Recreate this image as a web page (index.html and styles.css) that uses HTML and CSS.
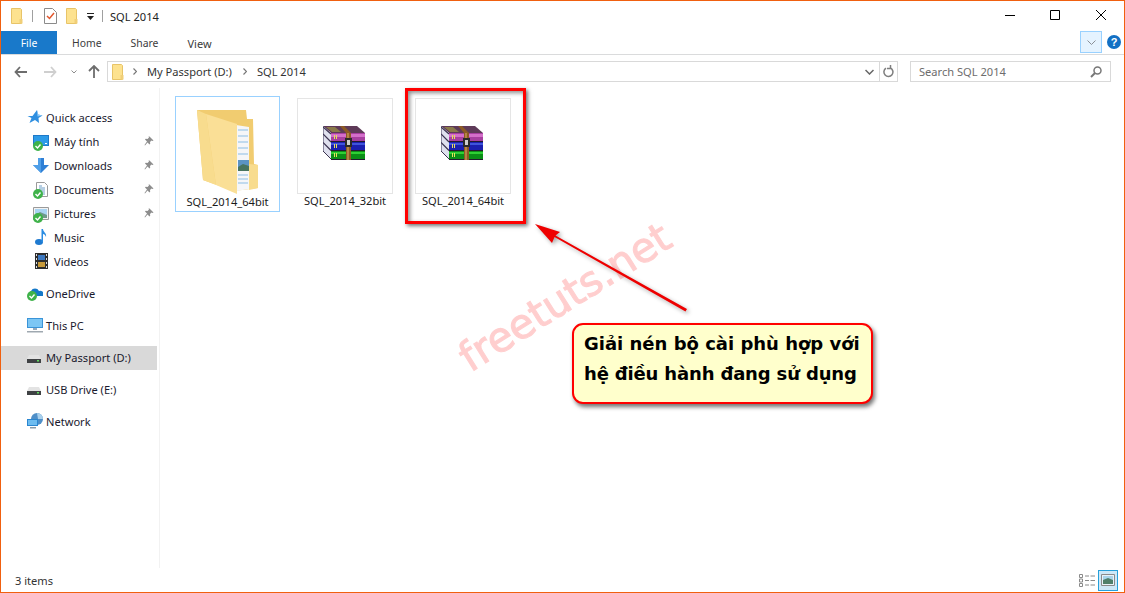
FILE: index.html
```html
<!DOCTYPE html>
<html lang="en">
<head>
<meta charset="utf-8">
<title>SQL 2014</title>
<link rel="stylesheet" href="styles.css">
</head>
<body>
<svg class="defs" width="0" height="0" aria-hidden="true">
  <defs>
    <symbol id="folder-small" viewBox="0 0 12 16">
      <path d="M.5.5h9l1 1v14H.5z" fill="#fde28f" stroke="#e8c468"/>
      <path d="M8.5 11h3v4.500h-3z" fill="#f0cf78"/>
    </symbol>
    <symbol id="rar" viewBox="0 0 44 34">
      <path d="M0 0h34l8 7H8z" fill="#5e3a58"/>
      <path d="M3 1h9l6 5H9z" fill="#8a7a4a"/>
      <path d="M0 0l8 7v26l-8-8z" fill="#dfe0ee"/>
      <path d="M0 8l8 8M0 16.500l8 8M0 1l8 7" stroke="#3b3350" stroke-width="1.200"/>
      <path d="M0 0v25l8 8" fill="none" stroke="#3b3350"/>
      <path d="M8 7h34v8H8z" fill="#a83fa0"/>
      <path d="M8 8h34v3H8z" fill="#d46fca"/>
      <path d="M8 16h34v8H8z" fill="#1a1fb0"/>
      <path d="M8 17h34v2H8z" fill="#3f55dc"/>
      <path d="M8 25h34v8H8z" fill="#0a8f16"/>
      <path d="M8 26h34v2H8z" fill="#2fd034"/>
      <path d="M8 15h34v1H8zM8 24h34v1H8zM8 33h34v1H8z" fill="#221a30"/>
      <path d="M11 9h1v4h-1zM13 9h1v4h-1zM11 18h1v4h-1zM13 18h1v4h-1zM11 27h1v4h-1zM13 27h1v4h-1z" fill="#e8e05a"/>
      <path d="M17 0h4l7 7v27h-5V7z" fill="#8c5a24"/>
      <path d="M24 7h2v27h-2z" fill="#b58545"/>
      <path d="M22 12h7v9h-7z" fill="#2a2a2a"/>
      <path d="M24 14h3v5h-3z" fill="#cfcfcf"/>
    </symbol>
    <symbol id="check-badge" viewBox="0 0 10 10">
      <circle cx="5" cy="5" r="5" fill="#3fb24a"/>
      <path d="M2.500 5l2 2 3-3.500" fill="none" stroke="#fff" stroke-width="1.400"/>
    </symbol>
    <symbol id="pin" viewBox="0 0 10 10">
      <path d="M5.500.5l4 4-1 .5-1-.5-1.500 1.500.2 1.800-.7.7-2-2L1 9.500l-.5-.5 2.500-3.500-2-2 .7-.7 1.800.2L5 1.500 4.500.5z" fill="#8d8d8d"/>
    </symbol>
    <symbol id="drive" viewBox="0 0 14 8">
      <path d="M2 0h10l2 4v4H0V4z" fill="#e3e3e3"/>
      <path d="M0 4h14v4H0z" fill="#3f4244"/>
      <path d="M10 5h2v1.500h-2z" fill="#5fdc5f"/>
    </symbol>
  </defs>
</svg>

<div class="window">
  <header class="titlebar">
    <svg class="qat-folder" width="12" height="16"><use href="#folder-small"/></svg>
    <span class="qat-sep"></span>
    <svg class="qat-doc" width="13" height="16" viewBox="0 0 13 16">
      <path d="M.5.5h8l4 4v11H.5z" fill="#fff" stroke="#8b8b8b"/>
      <path d="M3 8l2.500 2.500L10 5" fill="none" stroke="#e2562d" stroke-width="1.500"/>
    </svg>
    <svg class="qat-folder2" width="12" height="16"><use href="#folder-small"/></svg>
    <svg class="qat-drop" width="7" height="7" viewBox="0 0 7 7">
      <path d="M0 0h7v1H0zM0 3h7L3.500 7z" fill="#222"/>
    </svg>
    <span class="qat-sep qat-sep-end"></span>
    <span class="title-text">SQL 2014</span>
    <div class="window-controls">
      <svg width="10" height="10" viewBox="0 0 10 10"><path d="M0 5.500h10" stroke="#000"/></svg>
      <svg width="10" height="10" viewBox="0 0 10 10"><path d="M.5.500h9v9h-9z" fill="none" stroke="#000"/></svg>
      <svg width="10" height="10" viewBox="0 0 10 10"><path d="M0 0l10 10M10 0L0 10" stroke="#000"/></svg>
    </div>
  </header>

  <nav class="ribbon">
    <span class="tab tab-file">File</span>
    <span class="tab tab-home">Home</span>
    <span class="tab tab-share">Share</span>
    <span class="tab tab-view">View</span>
    <span class="ribbon-expand">
      <svg width="9" height="5" viewBox="0 0 9 5"><path d="M.5.500l4 4 4-4" fill="none" stroke="#8a8f96"/></svg>
    </span>
    <span class="help">?</span>
  </nav>

  <div class="addressbar">
    <svg class="nav-back" width="13" height="12" viewBox="0 0 13 12"><path d="M6 1L1.500 6 6 11M2 6h11" fill="none" stroke="#6d6d6d" stroke-width="1.800"/></svg>
    <svg class="nav-forward" width="13" height="12" viewBox="0 0 13 12"><path d="M7 1l4.500 5L7 11M11 6H0" fill="none" stroke="#cfcfcf" stroke-width="1.800"/></svg>
    <svg class="nav-recent" width="6" height="4" viewBox="0 0 6 4"><path d="M.5.500L3 3 5.500.5" fill="none" stroke="#8d8d8d"/></svg>
    <svg class="nav-up" width="12" height="13" viewBox="0 0 12 13"><path d="M1 6l5-5 5 5M6 1.500V13" fill="none" stroke="#6d6d6d" stroke-width="1.800"/></svg>
    <div class="path-box">
      <svg class="path-folder" width="12" height="16"><use href="#folder-small"/></svg>
      <svg class="crumb-chev" width="4" height="7" viewBox="0 0 4 7"><path d="M.5.500l3 3-3 3" fill="none" stroke="#777" stroke-width="1.200"/></svg>
      <span class="crumb crumb-drive">My Passport (D:)</span>
      <svg class="crumb-chev crumb-chev-2" width="4" height="7" viewBox="0 0 4 7"><path d="M.5.500l3 3-3 3" fill="none" stroke="#777" stroke-width="1.200"/></svg>
      <span class="crumb crumb-folder">SQL 2014</span>
      <svg class="path-drop" width="9" height="6" viewBox="0 0 9 6"><path d="M.5 1l4 4 4-4" fill="none" stroke="#666" stroke-width="1.500"/></svg>
      <span class="path-refresh">
        <svg width="11" height="13" viewBox="0 0 11 13"><path d="M3 3.200a4.500 4.500 0 1 0 4.500-.2M7.500 0v3.500H4" fill="none" stroke="#7f7f7f" stroke-width="1.500"/></svg>
      </span>
    </div>
    <div class="search-box">
      <span class="search-text">Search SQL 2014</span>
      <svg width="12" height="12" viewBox="0 0 12 12"><circle cx="7.500" cy="4.500" r="3.500" fill="none" stroke="#777" stroke-width="1.500"/><path d="M5 7l-4 4" stroke="#777" stroke-width="2"/></svg>
    </div>
  </div>

  <main class="main">
    <aside class="sidebar">
      <div class="nav-group">
        <div class="nav-row nav-top">
          <svg class="nav-icon" width="16" height="14" viewBox="0 0 15 14"><path d="M9.500 0l1 4.500L15 5.500l-4 2.500.5 5-4-3L2 13l2-5L0 6h5z" fill="#2f8fe0"/><path d="M9.500 0l1 4.500L15 5.500l-5 1z" fill="#8cc8f5"/></svg>
          <span>Quick access</span>
        </div>
        <div class="nav-row nav-sub">
          <span class="icon-wrap">
            <svg width="16" height="13" viewBox="0 0 16 13"><path d="M0 0h16v11H0z" fill="#1e79c8"/><path d="M1 1h14v9H1z" fill="#2d9be8"/><path d="M12 8h2v1h-2z" fill="#fff"/></svg>
            <svg class="badge" width="10" height="10"><use href="#check-badge"/></svg>
          </span>
          <span>Máy tính</span>
          <svg class="pin" width="10" height="10"><use href="#pin"/></svg>
        </div>
        <div class="nav-row nav-sub">
          <span class="icon-wrap">
            <svg width="16" height="15" viewBox="0 0 16 15"><path d="M5 0h6v7h5l-8 8-8-8h5z" fill="#2f80d6"/><path d="M5 0h3v15L0 7h5z" fill="#4f9fe8"/></svg>
          </span>
          <span>Downloads</span>
          <svg class="pin" width="10" height="10"><use href="#pin"/></svg>
        </div>
        <div class="nav-row nav-sub">
          <span class="icon-wrap">
            <svg width="15" height="15" viewBox="0 0 15 15"><path d="M3.500.5h8l3 3v11h-11z" fill="#fff" stroke="#9a9a9a"/><path d="M6 4h3M6 6h6M6 8h6M6 10h6M6 12h6" stroke="#6f9fc8"/></svg>
            <svg class="badge" width="10" height="10"><use href="#check-badge"/></svg>
          </span>
          <span>Documents</span>
          <svg class="pin" width="10" height="10"><use href="#pin"/></svg>
        </div>
        <div class="nav-row nav-sub">
          <span class="icon-wrap">
            <svg width="16" height="13" viewBox="0 0 16 13"><path d="M.5.500h15v12H.5z" fill="#f2f2f2" stroke="#9a9a9a"/><path d="M2 2h12v6H2z" fill="#a9d4f2"/><path d="M2 8l5-3 7 3v3H2z" fill="#6f9a8a"/></svg>
            <svg class="badge" width="10" height="10"><use href="#check-badge"/></svg>
          </span>
          <span>Pictures</span>
          <svg class="pin" width="10" height="10"><use href="#pin"/></svg>
        </div>
        <div class="nav-row nav-sub">
          <span class="icon-wrap icon-indent">
            <svg width="12" height="16" viewBox="0 0 12 16"><ellipse cx="4" cy="13" rx="4" ry="3" fill="#1f7ad0"/><path d="M6.500 0h1.500c0 3 4 4 3 8-.5-2-2-3-3-3v8H6.500z" fill="#2a8ce2"/></svg>
          </span>
          <span>Music</span>
        </div>
        <div class="nav-row nav-sub">
          <span class="icon-wrap icon-indent">
            <svg width="13" height="16" viewBox="0 0 13 16"><path d="M0 0h13v16H0z" fill="#2d2d2d"/><path d="M3 2h7v5H3z" fill="#3d78c0"/><path d="M3 9h7v5H3z" fill="#c79a3a"/><path d="M1 1h1v2H1zM1 5h1v2H1zM1 9h1v2H1zM1 13h1v2H1zM11 1h1v2h-1zM11 5h1v2h-1zM11 9h1v2h-1zM11 13h1v2h-1z" fill="#ddd"/></svg>
          </span>
          <span>Videos</span>
        </div>
      </div>
      <div class="nav-group">
        <div class="nav-row nav-top">
          <span class="icon-wrap-top">
            <svg width="16" height="12" viewBox="0 0 16 12"><path d="M2 8a4 4 0 0 1 2-4 4.500 4.500 0 0 1 8 0 3 3 0 0 1 4 4v1H2z" fill="#1478c8"/></svg>
            <svg class="badge-top" width="10" height="10"><use href="#check-badge"/></svg>
          </span>
          <span>OneDrive</span>
        </div>
      </div>
      <div class="nav-group">
        <div class="nav-row nav-top">
          <span class="icon-wrap-top">
            <svg width="16" height="15" viewBox="0 0 16 15"><path d="M0 0h16v10H0z" fill="#3a94d8"/><path d="M1 1h14v8H1z" fill="#7cc6f4"/><path d="M6 10h4v2H6z" fill="#9ab"/><path d="M0 13h16v1.500H0z" fill="#9fa8b0"/></svg>
          </span>
          <span>This PC</span>
        </div>
      </div>
      <div class="nav-group">
        <div class="nav-row nav-top nav-selected">
          <span class="icon-wrap-top icon-drive">
            <svg width="14" height="8"><use href="#drive"/></svg>
          </span>
          <span>My Passport (D:)</span>
        </div>
      </div>
      <div class="nav-group">
        <div class="nav-row nav-top">
          <span class="icon-wrap-top icon-drive">
            <svg width="14" height="8"><use href="#drive"/></svg>
          </span>
          <span>USB Drive (E:)</span>
        </div>
      </div>
      <div class="nav-group">
        <div class="nav-row nav-top">
          <span class="icon-wrap-top">
            <svg width="16" height="16" viewBox="0 0 16 16"><circle cx="10" cy="6" r="6" fill="#4f8fc8"/><path d="M10 0a6 6 0 0 1 6 6h-5z" fill="#a9d0ec"/><path d="M0 6h11v7H0z" fill="#2a86d0"/><path d="M1 7h9v5H1z" fill="#6dbcf0"/><path d="M3 14h6v1.500H3z" fill="#8a9aa8"/></svg>
          </span>
          <span>Network</span>
        </div>
      </div>
    </aside>

    <section class="files">
      <div class="tile tile-folder">
        <svg class="big-folder" width="64" height="88" viewBox="195 106 64 88">
          <path d="M196 108h49l1 9h6l1 45 4 1v23l-24 3-31-11z" fill="#f1cc70"/>
          <path d="M196 108l6 70 13 5-10-71z" fill="#f8dc8e"/>
          <path d="M235 123l13 2v62l-12 2z" fill="#f5f6f8"/>
          <path d="M237 128h10M237 134h10M237 140h10M237 146h10M237 152h10M237 173h10M237 177h10M237 181h10" stroke="#8cbde3"/>
          <path d="M237 158h11v9h-11z" fill="#5b93c3"/>
          <path d="M237 165l5-3 6 2v5h-11z" fill="#47745f"/>
          <path d="M205 112l31 10v70l-21-9z" fill="#fadf96"/>
          <path d="M248 162l9 1v23l-9 2z" fill="#f8dc8e"/>
        </svg>
        <span class="file-name">SQL_2014_64bit</span>
      </div>
      <div class="tile tile-archive">
        <div class="thumb"><svg width="44" height="34"><use href="#rar"/></svg></div>
        <span class="file-name">SQL_2014_32bit</span>
      </div>
      <div class="tile tile-archive">
        <div class="thumb"><svg width="44" height="34"><use href="#rar"/></svg></div>
        <span class="file-name">SQL_2014_64bit</span>
      </div>
    </section>
  </main>

  <footer class="statusbar">
    <span class="status-text">3 items</span>
    <svg class="view-details" width="16" height="13" viewBox="0 0 16 13">
      <path d="M.5.500h3v3h-3zM.5 5h3v3h-3zM.5 9.500h3v3h-3z" fill="#fff" stroke="#8a8a8a"/>
      <path d="M6 2h4M11.500 2H16M6 6.500h4M11.500 6.500H16M6 11h4M11.500 11H16" stroke="#8a8a8a"/>
    </svg>
    <span class="view-large">
      <svg width="14" height="12" viewBox="0 0 14 12"><path d="M.5.500h13v11H.5z" fill="#e9f2f8" stroke="#8a8a8a"/><path d="M2 2h10v4H2z" fill="#a9d4ea"/><path d="M2 6l5-2 5 2v4H2z" fill="#4f7f6a"/></svg>
    </span>
  </footer>

  <div class="redbox"></div>
  <svg class="arrow" width="170" height="100" viewBox="530 218 170 100">
    <path d="M535 224l25 8-4.500 3.500L687 309l-1.500 2.500-131-74.500-2.500 6z" fill="#ee0000"/>
  </svg>
  <div class="callout">
    <span class="callout-first">Giải nén bộ cài phù hợp với</span>
    <span class="callout-second">hệ điều hành đang sử dụng</span>
  </div>
  <div class="watermark">freetuts.net</div>
</div>
</body>
</html>
```

FILE: styles.css
```css
* { box-sizing: border-box; }
html, body { margin: 0; height: 100%; background: #fff; }
.defs { position: absolute; }
.window {
  position: relative;
  width: 1125px;
  height: 593px;
  padding: 1px;
  display: flex;
  flex-direction: column;
  overflow: hidden;
  background: #fff;
  box-shadow: inset 0 0 0 1px #f0600f;
  font-family: "Noto Sans", sans-serif;
  font-size: 11.1px;
  color: #1a1a1a;
}
svg { display: block; flex: none; }

.titlebar { height: 30px; display: flex; align-items: center; padding-left: 10px; flex: none; }
.qat-sep { width: 1px; height: 12px; background: #a0a0a0; margin: 0 11px 0 9px; }
.qat-doc { margin-right: 9px; }
.qat-folder2 { margin-right: 9px; }
.qat-sep-end { margin: 0 7px 0 8px; }
.title-text { color: #222; }
.window-controls { margin-left: auto; display: flex; gap: 35px; padding: 0 18px 2px 0; }
.window-controls svg:last-child { margin-left: 1px; }

.ribbon { height: 24px; display: flex; align-items: stretch; flex: none; border-bottom: 1px solid #dadbdc; position: relative; font-size: 10.4px; color: #3c3c3c; }
.tab { display: flex; align-items: center; justify-content: center; padding-top: 1px; }
.tab-file { width: 56px; background: #1979ca; color: #fff; }
.tab-home { margin-left: 15px; }
.tab-share { margin-left: 29px; }
.tab-view { margin-left: 29px; font-size: 11px; }
.ribbon-expand { margin-left: auto; width: 22px; height: 22px; background: #e5f3ff; border: 1px solid #99d1ff; display: flex; align-items: center; justify-content: center; }
.help { width: 14px; height: 14px; margin: 4px 3px 0 5px; border-radius: 50%; background: #1270c4; color: #fff; font: bold 11px/14px "Liberation Sans", sans-serif; text-align: center; }

.addressbar { height: 33px; flex: none; display: flex; align-items: flex-start; padding: 6px 13px 0 13px; }
.nav-back { margin: 5px 17px 0 0; }
.nav-forward { margin: 5px 14px 0 0; }
.nav-recent { margin: 9px 11px 0 0; }
.nav-up { margin: 4px 7px 0 0; }
.path-box { width: 791px; height: 21px; border: 1px solid #d9d9d9; display: flex; align-items: center; padding-left: 4px; }
.crumb-chev { margin-left: 9px; }
.crumb-chev-2 { margin-left: 0; }
.crumb { color: #333; }
.crumb-drive { margin: 0 11px 0 10px; }
.crumb-folder { margin-left: 10px; }
.path-drop { margin-left: auto; margin-right: 5px; }
.path-refresh { height: 100%; width: 18px; border-left: 1px solid #d9d9d9; display: flex; align-items: center; justify-content: center; }
.search-box { width: 201px; height: 21px; margin-left: 12px; border: 1px solid #d9d9d9; display: flex; align-items: center; justify-content: space-between; padding: 0 8px; color: #6d6d6d; }

.main { flex: 1; display: flex; min-height: 0; }
.sidebar { width: 159px; flex: none; padding-top: 18px; border-right: 1px solid #f2f2f2; color: #1a1a2e; }
.nav-group + .nav-group { margin-top: 8px; }
.nav-row { height: 24px; display: flex; align-items: center; padding-bottom: 2px; }
.nav-top { padding-left: 26px; gap: 3px; }
.nav-sub { padding-left: 32px; }
.nav-selected { background: #d9d9d9; margin-right: 2px; }
.icon-wrap { position: relative; width: 21px; height: 16px; display: flex; align-items: center; }
.icon-indent { padding-left: 2px; }
.icon-wrap-top { position: relative; width: 16px; height: 16px; display: flex; align-items: center; }
.icon-drive { padding-top: 4px; }
.badge { position: absolute; left: 0; bottom: -2px; }
.badge-top { position: absolute; left: 0; bottom: 0; }
.pin { margin-left: auto; margin-right: 5px; }

.files { flex: 1; display: flex; align-items: flex-start; padding: 8px 0 0 15px; }
.tile { display: flex; flex-direction: column; align-items: center; flex: none; }
.tile-folder { width: 105px; height: 116px; border: 1px solid #99d1ff; margin-right: 17px; padding-top: 11px; }
.big-folder { margin-bottom: 0; }
.tile-folder .file-name { margin-top: -1px; }
.tile-archive { width: 96px; margin-top: 2px; margin-right: 22px; }
.thumb { width: 96px; height: 96px; border: 1px solid #e5e5e5; padding-bottom: 6px; display: flex; align-items: center; justify-content: center; }
.file-name { line-height: 14px; margin-top: 0; color: #1a1a1a; }

.statusbar { height: 24px; flex: none; display: flex; align-items: center; padding: 0 6px 0 14px; }
.status-text { color: #333; }
.view-details { margin-left: auto; margin-right: 3px; }
.view-large { width: 20px; height: 21px; background: #cde8f8; border: 1px solid #26a0da; display: flex; align-items: center; justify-content: center; }

.redbox { position: absolute; left: 405px; top: 88px; width: 121px; height: 136px; border: 3px solid #f00; box-shadow: 2px 2px 4px rgba(0,0,0,.55), inset 2px 2px 4px rgba(0,0,0,.45); }
.arrow { position: absolute; left: 530px; top: 218px; filter: drop-shadow(2px 2px 2px rgba(0,0,0,.35)); }
.callout { position: absolute; left: 572px; top: 323px; width: 301px; height: 81px; border: 2px solid #f00; border-radius: 11px; background: #ffffcc; box-shadow: 2px 3px 4px rgba(0,0,0,.55); padding: 4px 0 0 10px; font: bold 18px/30px "DejaVu Sans", sans-serif; color: #000; display: flex; flex-direction: column; white-space: nowrap; }
.callout-second { letter-spacing: -.16px; }
.watermark { position: absolute; left: 440px; top: 272px; width: 250px; text-align: center; font: 41px/50px "DejaVu Sans", sans-serif; -webkit-text-stroke: 1.1px #f00; color: #f00; opacity: .19; transform: rotate(-32deg); white-space: nowrap; }
```
